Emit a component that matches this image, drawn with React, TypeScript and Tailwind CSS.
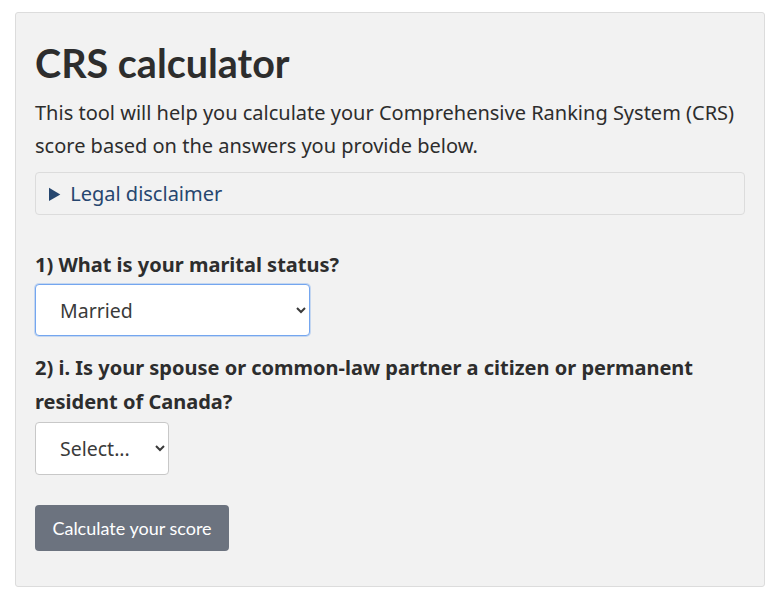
import { useState } from "react";

export default function App() {
  const [marital, setMarital] = useState("married");
  const [spouse, setSpouse] = useState("");

  return (
    <div className="min-h-screen bg-white pt-3 pl-[15px]">
      <div className="w-[750px] rounded-[3px] border border-[#dcdcdc] bg-[#f2f2f2] pl-[19px] pr-5 pt-[26px] pb-[35px] font-['Noto_Sans',sans-serif] text-[#2d2d2d]">
        <h1 className="font-['Lato',sans-serif] text-[39.5px] font-bold leading-[48px] text-[#2d2d2d]">CRS calculator</h1>
        <p className="mt-[9px] text-[20px] leading-[33px]">
          This tool will help you calculate your Comprehensive Ranking System (CRS) score based on the answers you provide below.
        </p>
        <details className="mt-[10px] w-[710px] rounded-[4px] border border-[#dcdcdc]">
          <summary className="cursor-pointer pl-[13px] py-[5px] text-[20px] leading-[31px] text-[#26466f]">Legal disclaimer</summary>
          <p className="px-[15px] pb-3 text-[16px]">This calculator is for general information only.</p>
        </details>

        <label className="mt-[34px] block text-[20px] font-bold leading-[32px]">1) What is your marital status?</label>
        <select
          value={marital}
          onChange={(e) => setMarital(e.target.value)}
          className="mt-[3px] block h-[52px] w-[275px] rounded-[4px] border border-[#74a6ef] bg-white pl-[20px] pr-[8px] text-[19.5px] text-[#3a3a3a] shadow-[0_0_0_1px_rgba(116,166,239,0.35)] outline-none"
        >
          <option value="">Select...</option>
          <option value="annulled">Annulled Marriage</option>
          <option value="married">Married</option>
          <option value="single">Never Married / Single</option>
        </select>

        <label className="mt-[15px] block w-[680px] text-[20px] font-bold leading-[34px]">
          2) i. Is your spouse or common-law partner a citizen or permanent resident of Canada?
        </label>
        <select
          value={spouse}
          onChange={(e) => setSpouse(e.target.value)}
          className="mt-[3px] block h-[53px] w-[134px] rounded-[4px] border border-[#c8c8c8] bg-white pl-[20px] pr-[8px] text-[19.5px] text-[#3a3a3a] outline-none"
        >
          <option value="">Select...</option>
          <option value="no">No</option>
          <option value="yes">Yes</option>
        </select>

        <button className="mt-[30px] block h-[46px] w-[194px] rounded-[4px] bg-[#6c737f] font-['Lato',sans-serif] text-[18px] text-white">
          Calculate your score
        </button>
      </div>
    </div>
  );
}
